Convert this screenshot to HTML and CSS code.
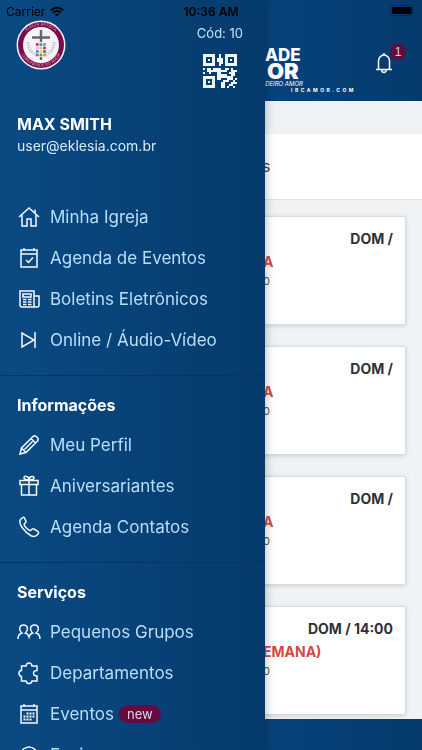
FILE: index.html
```
<!DOCTYPE html>
<html lang="pt-BR">
<head>
    <meta charset="UTF-8">
    <meta name="viewport" content="width=device-width, initial-scale=1.0">
    <title>Agenda</title>
    <link rel="stylesheet" href="styles.css">
</head>
<body>

    <!-- Status bar -->
    <div class="status-bar">
        <div class="carrier">
            <span>Carrier</span>
            <svg width="14" height="11" viewBox="0 0 14 11" fill="none" stroke="#000" stroke-width="2">
                <path d="M1 4.2a8.5 8.5 0 0 1 12 0M3.2 6.6a5.4 5.4 0 0 1 7.6 0"/>
                <path d="M5 8.4a2.9 2.9 0 0 1 4 0L7 10.6z" fill="#000" stroke="none"/>
            </svg>
        </div>
        <span class="clock">10:36 AM</span>
        <svg class="battery" width="26" height="12" viewBox="0 0 26 12">
            <rect x="0.5" y="0.5" width="22" height="10" rx="2.5" fill="none" stroke="#042a50"/>
            <rect x="2" y="2" width="19.5" height="7" rx="1"/>
            <path d="M24 4v3.500q1.500-1.700 0-3.500" fill="#042a50"/>
        </svg>
    </div>

    <!-- Page behind the menu -->
    <div class="page">
        <header class="topbar">
            <svg class="brand" width="110" height="48" viewBox="0 0 110 48" fill="#fff" font-family="Inter, sans-serif">
                <text x="7" y="16" font-size="17" font-weight="800">ADE</text>
                <rect x="6" y="18" width="1" height="16"/>
                <text x="9" y="34" font-size="22" font-weight="900">OR</text>
                <text x="3" y="41" font-size="6" font-style="italic">ADEIRO AMOR</text>
                <text x="33" y="47" font-size="5" font-weight="700" letter-spacing="2.500">IBCAMOR.COM</text>
            </svg>
            <button class="bell" aria-label="Notificações">
                <svg width="18" height="22" viewBox="0 0 18 22" fill="none" stroke="#fff" stroke-width="1.500" stroke-linejoin="round">
                    <path d="M1 17.500h16M3.500 17.500V9a5.500 6 0 0 1 11 0v8.500M9 3V1M6.800 18a2.200 2.500 0 0 0 4.400 0"/>
                </svg>
                <span class="count">1</span>
            </button>
        </header>

        <main>
            <div class="title-strip">s</div>

            <div class="cards">
                <article class="card">
                    <p class="when">DOM /</p>
                    <h3>A</h3>
                    <p class="place">0</p>
                </article>
                <article class="card">
                    <p class="when">DOM /</p>
                    <h3>A</h3>
                    <p class="place">0</p>
                </article>
                <article class="card">
                    <p class="when">DOM /</p>
                    <h3>A</h3>
                    <p class="place">0</p>
                </article>
                <article class="card">
                    <p class="when">DOM / 14:00</p>
                    <h3>EMANA)</h3>
                    <p class="place">0</p>
                </article>
            </div>
        </main>

        <footer class="bottombar"></footer>
    </div>

    <!-- Side menu -->
    <aside class="drawer">
        <div class="profile">
            <svg width="50" height="50" viewBox="0 0 50 50">
                <circle cx="25" cy="25" r="24.500" fill="#f5eef3"/>
                <circle cx="25" cy="25" r="23" fill="#7a0a4a"/>
                <circle cx="25" cy="25" r="18" fill="#f4f4f6"/>
                <path id="ringTop" d="M5.500 25a19.500 19.500 0 0 1 39 0" fill="none"/>
                <path id="ringBottom" d="M3.500 25a21.500 21.500 0 0 0 43 0" fill="none"/>
                <g fill="#d9a9c6" font-family="Inter, sans-serif" font-size="4" text-anchor="middle">
                    <text><textPath href="#ringTop" startOffset="50%">IGREJA BATISTA</textPath></text>
                    <text><textPath href="#ringBottom" startOffset="50%">COMUNIDADE DO AMOR</textPath></text>
                </g>
                <path d="M25 10v12M16 17.500h18M25 37v3" stroke="#666" stroke-width="2.400"/>
                <path d="M12 22q0 10 9 13M38 22q0 10-9 13" fill="none" stroke="#c3cccb" stroke-width="3" stroke-dasharray="1.500 1"/>
                <g stroke-width="2.600">
                    <path d="M20 24.500h2.600" stroke="#c8198b"/>
                    <path d="M23.600 24.500h2.600" stroke="#2ba85a"/>
                    <path d="M27.200 24.500h2.600" stroke="#27b3a5"/>
                    <path d="M20 28h2.600" stroke="#e5b5d5"/>
                    <path d="M23.600 28h2.600" stroke="#e9a9c8"/>
                    <path d="M27.200 28h2.600" stroke="#d2281e"/>
                    <path d="M20 31.500h2.600" stroke="#2d86d0"/>
                    <path d="M23.600 31.500h2.600" stroke="#e8d43a"/>
                    <path d="M27.200 31.500h2.600" stroke="#8a3ab0"/>
                    <path d="M20 35h2.600" stroke="#d63ab8"/>
                    <path d="M23.600 35h2.600" stroke="#3bb54a"/>
                    <path d="M27.200 35h2.600" stroke="#f08a24"/>
                </g>
            </svg>
            <div class="code">
                <span>Cód: 10</span>
                <svg width="34" height="34" viewBox="0 0 17 17" fill="#f1f6fb" fill-rule="evenodd" shape-rendering="crispEdges">
                    <path d="M0 0h6v6H0zM1.500 1.500v3h3v-3zM2.500 2.500h1v1h-1zM11 0h6v6h-6zM12.500 1.500v3h3v-3zM13.500 2.500h1v1h-1zM0 11h6v6H0zM1.500 12.500v3h3v-3zM2.500 13.500h1v1h-1z"/>
                    <path d="M8 0h1v2h1v3H9v1H8V4H7V2h1zM0 7h1v1H0zM2 7h2v1h1V7h4v1h2V7h2v1h-1v1H9v1H7V9H4v1H3V9H2zM0 9h1v1H0zM14 7h1v1h2v1h-1v2h-2v-1h-1V9h1zM7 10h5v1h3v2h-3v-1H9v1H7zM16 12h1v1h-1zM9 14h1v-1h3v1h-2v3H9zM15 13h1v1h1v1h-2v1h-2v-1h1v-1h1zM12 16h1v1h-1zM15 16h1v1h-1z"/>
                </svg>
            </div>
        </div>

        <div class="user">
            <h1>MAX SMITH</h1>
            <p>user@eklesia.com.br</p>
        </div>

        <nav>
            <ul class="menu">
                <li><a href="#">
                    <svg class="icon" viewBox="0 0 24 24"><path d="M2 12 12 3l10 9M5 10v11h5v-7h4v7h5V10M18 8V4.500"/></svg>
                    Minha Igreja</a></li>
                <li><a href="#">
                    <svg class="icon" viewBox="0 0 24 24"><path d="M4 4h16v17H4zM4 8h16M7 2v3M17 2v3M9 14l2.500 2.500L16 11.500"/></svg>
                    Agenda de Eventos</a></li>
                <li><a href="#">
                    <svg class="icon" viewBox="0 0 24 24"><path d="M17 9V4H3v14q0 2 2 2h15q2 0 2-2V9h-5v9q0 2 1.500 2M6 7h8v3H6zM6 12.500h3.500M6 15h3.500M6 17.500h3.500M11 12.500h3.500M11 15h3.500M11 17.500h3.500"/></svg>
                    Boletins Eletrônicos</a></li>
                <li><a href="#">
                    <svg class="icon" viewBox="0 0 24 24"><path d="M5 5v14l12-7zM18 4v16"/></svg>
                    Online / Áudio-Vídeo</a></li>
            </ul>

            <h2>Informações</h2>
            <ul class="menu">
                <li><a href="#">
                    <svg class="icon" viewBox="0 0 24 24"><path d="M3 21l1.500-6L16 3.500q1.500-1.500 3.200 0l1.300 1.300q1.500 1.500 0 3.200L9 19.500zM4.500 15 9 19.500M14 5.500l4.500 4.500M7.500 16.500l8-8"/></svg>
                    Meu Perfil</a></li>
                <li><a href="#">
                    <svg class="icon" viewBox="0 0 24 24"><path d="M3 6.500h18v4H3zM4.500 10.500V21h15V10.500M12 6.500V21M12 6q-5 0-5-2.200T9.500 2.500Q12 3 12 6q0-3 2.500-3.500T17 3.800Q17 6 12 6"/></svg>
                    Aniversariantes</a></li>
                <li><a href="#">
                    <svg class="icon" viewBox="0 0 24 24"><path d="M6 2.500 3.500 4.500q-2 3 2 8.500t9 8q3.500 1 5-.5l2-2q.7-1-.5-2L17 14q-1-.7-2 .2l-1.500 1.300q-1 .5-4-2.500t-2.200-4L8.600 7.500q.8-1 .1-2L7.500 3Q7 2 6 2.500z"/></svg>
                    Agenda Contatos</a></li>
            </ul>

            <h2>Serviços</h2>
            <ul class="menu">
                <li><a href="#">
                    <svg class="icon" viewBox="0 0 24 24"><path d="M1 19q0-5 4-6Q2.500 11 2.700 8.500 3 5 6.500 5t4 3.500Q10.500 11 8.300 13q2.700.7 3.700 4 1-3.300 3.700-4-2.200-2-2.200-4.500.5-3.500 4-3.500t3.800 3.500Q21.500 11 19 13q4 1 4 6"/></svg>
                    Pequenos Grupos</a></li>
                <li><a href="#">
                    <svg class="icon" viewBox="0 0 24 24"><path d="M4.500 5H9q.500-3 3-3t3 3h5v4.500q-3.500 0-3.500 2.800T20 15v5h-5q-.5 2.500-3 2.500T9 20H4.500v-4.500Q2 15 2 12.300T4.500 9.500z"/></svg>
                    Departamentos</a></li>
                <li><a href="#">
                    <svg class="icon" viewBox="0 0 24 24"><path d="M4 4h16v17H4zM4 8h16M7 2v3M17 2v3"/><path d="M9.500 11.500h8.500M6.500 14.500H18M6.500 17.500H15" stroke-width="2" stroke-dasharray="2 1"/></svg>
                    Eventos <span class="new">new</span></a></li>
                <li><a href="#">
                    <svg class="icon" viewBox="0 0 24 24"><circle cx="12" cy="12" r="8"/></svg>
                    Ensino</a></li>
            </ul>
        </nav>
    </aside>

</body>
</html>
```
FILE: styles.css
```
* {
    box-sizing: border-box;
}

body {
    margin: 0;
    font-family: Inter, "Open Sans", sans-serif;
    background-color: #eff3f5;
    overflow: hidden;
}

h1, h2, h3, p, ul {
    margin: 0;
    padding: 0;
}

/* Status bar */
.status-bar {
    position: fixed;
    top: 0;
    left: 0;
    right: 0;
    z-index: 3;
    height: 22px;
    padding: 0 6px;
    display: grid;
    grid-template-columns: 1fr auto 1fr;
    align-items: center;
    font-size: 12px;
    color: #000;
}

.carrier {
    display: flex;
    align-items: center;
    gap: 5px;
}

.clock {
    font-weight: 600;
}

.battery {
    justify-self: end;
}

/* Page */
.page {
    height: 100vh;
    display: flex;
    flex-direction: column;
}

.topbar {
    height: 101px;
    flex-shrink: 0;
    padding: 0 22px 8px 258px;
    display: flex;
    justify-content: space-between;
    align-items: flex-end;
    background: linear-gradient(to right, #0a4a85, #06417a 70%, #063a6c);
}

.brand {
    flex-shrink: 0;
    overflow: visible;
}

.bell {
    position: relative;
    margin-bottom: 19px;
    padding: 0 7px 0 0;
    border: none;
    background: none;
    line-height: 0;
}

.count {
    position: absolute;
    top: -8px;
    right: -6px;
    width: 16px;
    border-radius: 8px;
    background-color: #640b40;
    color: #e6cfdc;
    font-size: 12px;
    line-height: 16px;
    text-align: center;
}

main {
    flex: 1;
    min-height: 0;
    padding-top: 33px;
}

.title-strip {
    padding-left: 262px;
    background-color: #fff;
    border-bottom: 1px solid #dfe3e5;
    font-size: 16px;
    line-height: 65px;
    color: #444;
}

.cards {
    padding: 16px;
    display: flex;
    flex-direction: column;
    gap: 21px;
}

.card {
    height: 109px;
    flex-shrink: 0;
    padding: 12px;
    background-color: #fff;
    border: 1px solid #d8dcde;
    border-radius: 2px;
    box-shadow: 0 1px 4px rgba(0, 0, 0, 0.15);
}

.when {
    font-size: 14px;
    font-weight: 700;
    line-height: 20px;
    text-align: right;
    color: #2e3138;
}

.card h3 {
    padding-left: 234px;
    font-size: 14px;
    font-weight: 700;
    line-height: 25px;
    color: #d04a4a;
}

.place {
    padding-left: 234px;
    font-size: 11px;
    line-height: 14px;
    color: #555;
}

.bottombar {
    height: 31px;
    flex-shrink: 0;
    position: relative;
    background: linear-gradient(to right, #0a4a85, #06417a 70%, #063a6c);
}

/* Side menu */
.drawer {
    position: fixed;
    top: 0;
    bottom: 0;
    left: 0;
    z-index: 2;
    width: 265px;
    padding-top: 20px;
    overflow: hidden;
    background: linear-gradient(to right, #0a4a83, #063a6c);
    box-shadow: 0 0 10px rgba(0, 0, 0, 0.3);
    color: #fff;
}

.profile {
    padding: 0 22px 0 16px;
    display: flex;
    justify-content: space-between;
}

.code {
    display: flex;
    flex-direction: column;
    align-items: center;
    gap: 12px;
    padding-top: 4px;
    font-size: 13px;
    line-height: 18px;
    color: #c5e2f7;
}

.user {
    padding: 24px 17px 40px;
}

.user h1 {
    font-size: 16px;
    font-weight: 700;
    line-height: 24px;
}

.user p {
    font-size: 14px;
    line-height: 20px;
    color: #d8ecfb;
}

.drawer h2 {
    padding: 19px 17px 9px;
    border-top: 1px solid #053561;
    font-size: 16px;
    font-weight: 700;
    line-height: 20px;
}

.menu {
    list-style: none;
    padding-bottom: 15px;
}

.menu a {
    display: flex;
    align-items: center;
    height: 41px;
    padding-left: 17px;
    font-size: 17px;
    color: #b9dffb;
    text-decoration: none;
}

.icon {
    width: 24px;
    height: 24px;
    margin-right: 9px;
    fill: none;
    stroke: #f2f9ff;
    stroke-width: 1.5;
}

.new {
    margin-left: 5px;
    padding: 0 8px;
    border-radius: 9px;
    background-color: #640b40;
    color: #e6cfdc;
    font-size: 13px;
    line-height: 18px;
}
```
